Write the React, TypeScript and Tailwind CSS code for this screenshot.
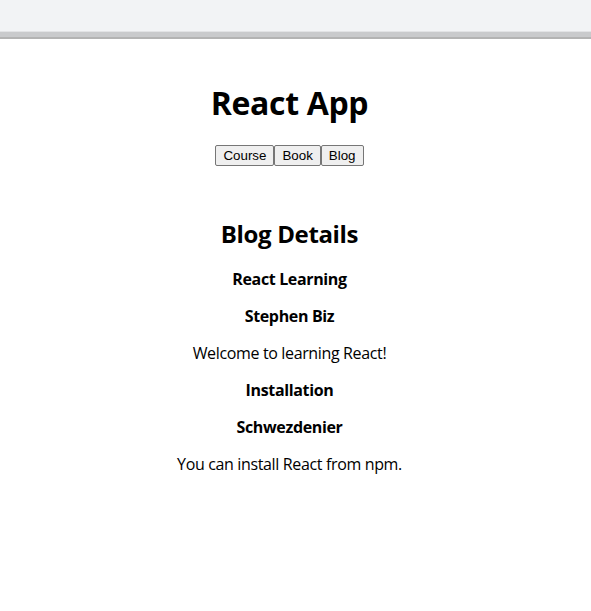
export default function App() {
  const btn = "h-[21px] rounded-[2px] border border-[#767676] bg-[#efefef] px-[7px] leading-[17px]";
  return (
    <div className="min-h-[611px] bg-white text-black">
      <div className="h-[31px] bg-[#f2f3f5]" />
      <div className="h-[1px] bg-[#e2e3e5]" />
      <div className="h-[5px] bg-[#c9cacc]" />
      <div className="h-[2px] bg-[#b3b3b3]" />
      <div className="flex w-[579px] flex-col items-center text-center font-['Open_Sans',sans-serif] tracking-[-0.022em]">
        <h1 className="mt-[43px] text-[32px] font-bold leading-[42px]">React App</h1>
        <div className="mt-[21px] flex font-['Liberation_Sans',Arial,sans-serif] text-[13.33px] tracking-normal">
          <button className={btn}>Course</button>
          <button className={btn}>Book</button>
          <button className={btn}>Blog</button>
        </div>
        <h2 className="mt-[52px] text-[24px] font-bold leading-[32px]">Blog Details</h2>
        <h4 className="mt-[19px] text-[16px] font-bold leading-[21px]">React Learning</h4>
        <h4 className="mt-[16px] text-[16px] font-bold leading-[21px]">Stephen Biz</h4>
        <p className="mt-[16px] text-[16px] leading-[21px]">Welcome to learning React!</p>
        <h4 className="mt-[16px] text-[16px] font-bold leading-[21px]">Installation</h4>
        <h4 className="mt-[16px] text-[16px] font-bold leading-[21px]">Schwezdenier</h4>
        <p className="mt-[16px] text-[16px] leading-[21px]">You can install React from npm.</p>
      </div>
    </div>
  );
}
